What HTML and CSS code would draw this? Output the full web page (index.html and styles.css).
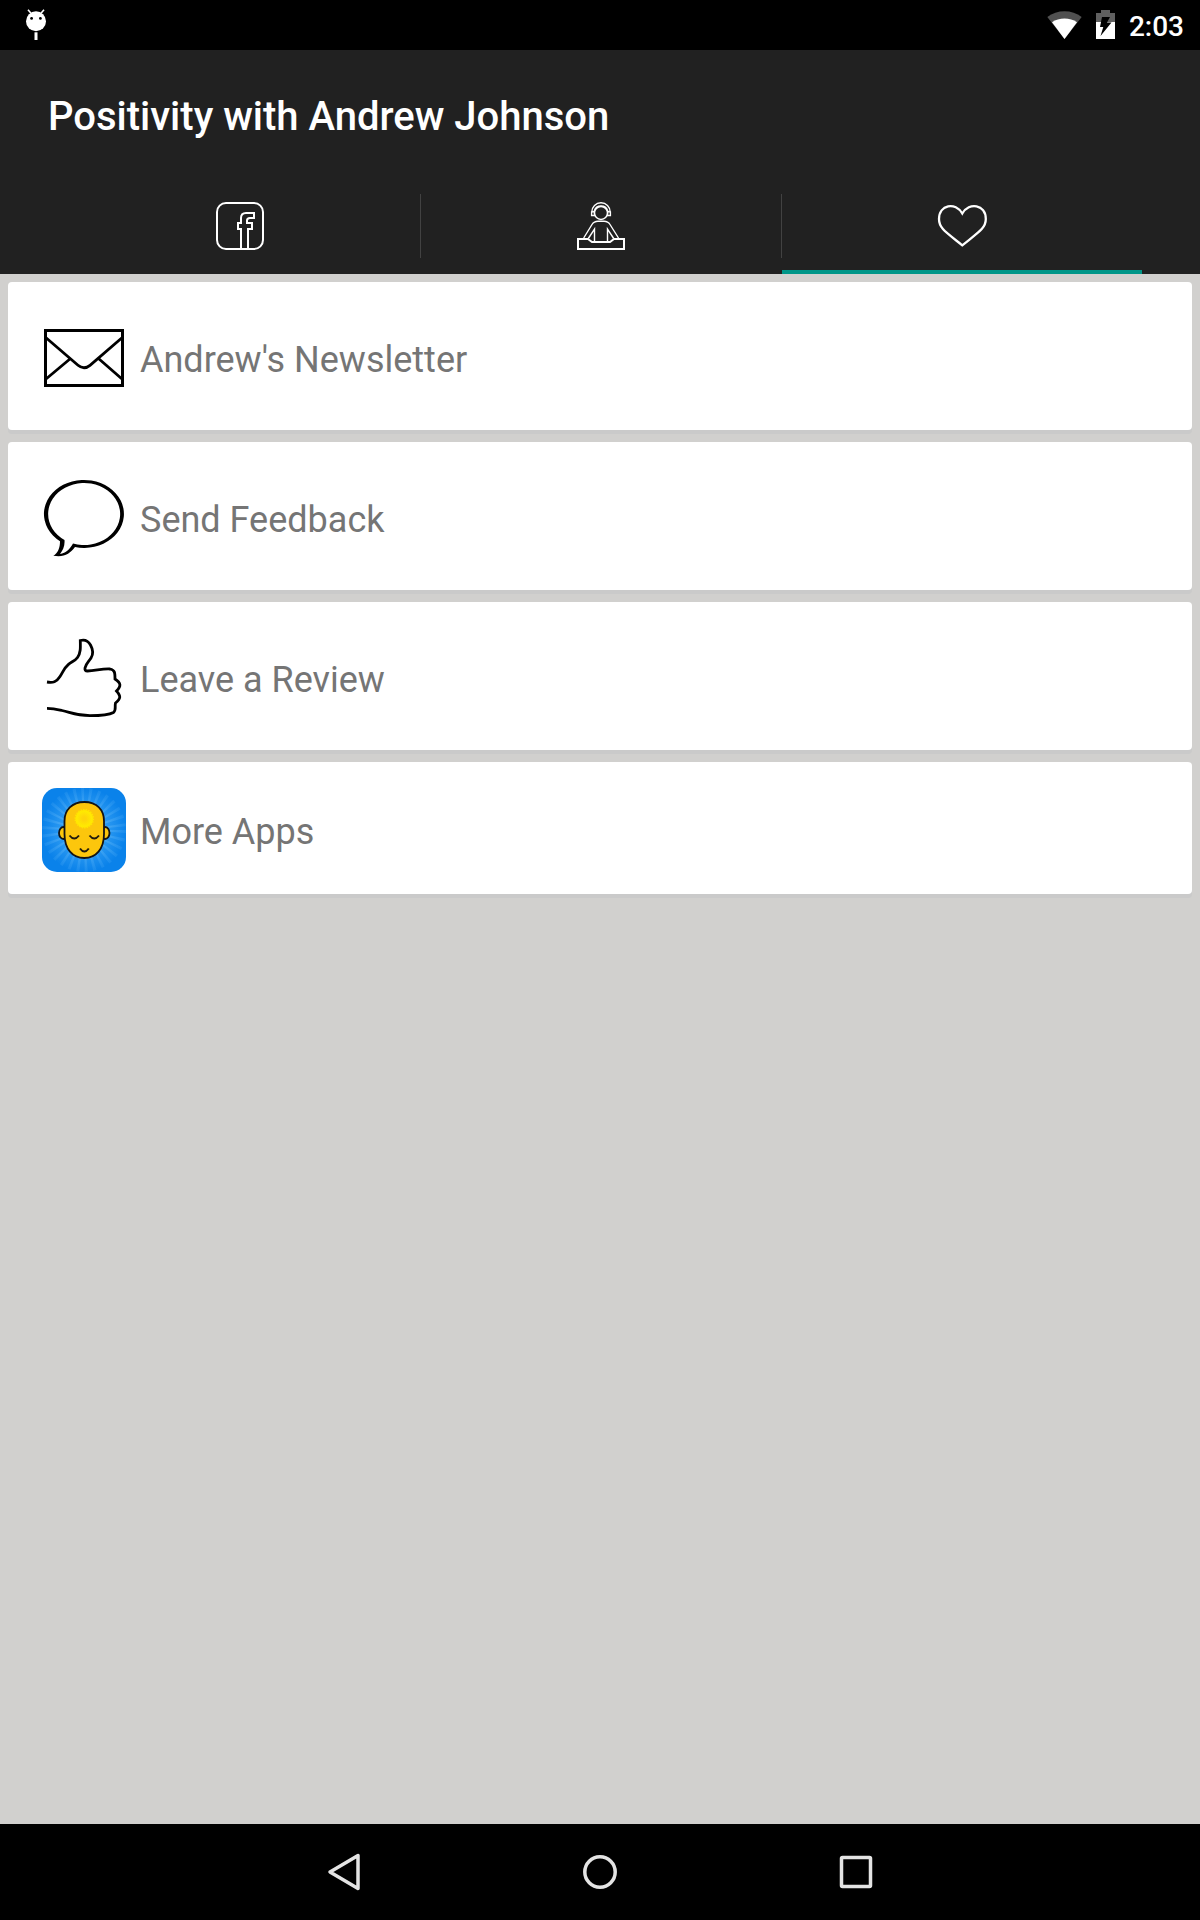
FILE: index.html
```html
<!DOCTYPE html>
<html lang="en">

<head>
    <meta charset="UTF-8">
    <meta name="viewport" content="width=device-width, initial-scale=1.0">
    <title>Positivity with Andrew Johnson</title>
    <link rel="stylesheet" href="styles.css">
</head>

<body>

    <div class="status-bar">
        <svg class="android" width="20" height="32" viewBox="0 0 20 32">
            <path d="M2 0.8L5 4.2M18 0.8L15 4.2" stroke="#fff" stroke-width="1.6" />
            <circle cx="10" cy="12.3" r="10" fill="#fff" />
            <circle cx="5.6" cy="9.4" r="1.4" />
            <circle cx="14.4" cy="9.4" r="1.4" />
            <path d="M8.5 23.3H11.5V31H8.5z" fill="#fff" />
        </svg>
        <div class="status-right">
            <svg width="35" height="30" viewBox="0 0 35 30">
                <path d="M17.5 29L0.3 7C10 -0.8 25 -0.8 34.7 7z" fill="#505050" />
                <path d="M17.5 29L5 12.2C12 7.2 23 7.2 30 12.2z" fill="#fff" />
            </svg>
            <svg width="19" height="30" viewBox="0 0 19 30">
                <path d="M5 0H14V3H19V12H0V3H5z" fill="#606060" />
                <path d="M0 12H19V29H0z" fill="#fff" />
                <path d="M6 7H14L11 12.5H15.5L4.5 26L7.3 17H4z" fill="#000" />
            </svg>
            <time>2:03</time>
        </div>
    </div>

    <header>
        <h1>Positivity with Andrew Johnson</h1>
        <nav class="tabs">
            <button class="tab" aria-label="Facebook">
                <svg width="48" height="48" viewBox="0 0 48 48">
                    <rect x="1" y="1" width="46" height="46" rx="9" />
                    <path d="M25 47V27H22V21H25V16Q25 11 30 11H38V16H34Q31 16 31 18.5V21H36V27H32V47" />
                </svg>
            </button>
            <button class="tab" aria-label="Sessions">
                <svg width="48" height="48" viewBox="0 0 48 48">
                    <g stroke-width="1.4">
                        <circle cx="24" cy="11" r="6.5" />
                        <path d="M14.8 10A9.2 9.2 0 0 1 33.2 10M17.3 9A7 7 0 0 1 30.7 9" />
                        <path d="M17.3 9.5L14.6 10V13.5H17.5zM30.7 9.5L33.4 10V13.5H30.5z" />
                        <path d="M6.7 36L15 22.5Q17 19.3 21 19.3H27Q31 19.3 33 22.5L41.5 36" />
                        <path d="M11.3 36.5L17.5 27V39.5M36.7 36.5L30.5 27V39.5" />
                    </g>
                    <path d="M1 37H11L15 40H33L37 37H47V47H1z" />
                </svg>
            </button>
            <button class="tab active" aria-label="Favourites">
                <svg width="50" height="48" viewBox="0 0 50 48">
                    <path stroke-width="2.3" d="M25.3 11.500C18.500 -0.500 2 2.500 2 17C2 26 8 29.500 25.300 43.300C42.500 29.500 48.800 26 48.800 17C48.800 2.500 32 -0.500 25.300 11.500z" />
                </svg>
            </button>
        </nav>
    </header>

    <main>
        <a class="card" href="#">
            <svg width="84" height="100" viewBox="0 0 84 100">
                <rect x="3.5" y="22.5" width="77" height="55" />
                <path d="M4 29.7L36 57.3Q42 62.3 48 57.3L80 29.7M4 71L28.5 50.5M80 71L56.5 50.5" stroke-width="2.8" />
            </svg>
            <span>Andrew's Newsletter</span>
        </a>
        <a class="card" href="#">
            <svg width="84" height="100" viewBox="0 0 84 100">
                <path d="M18 73.2A40 34 0 1 1 33 79.1C28 86 22 89.5 11.3 87.7C16 85 18 80 18 73.2zM22.5 72A36 31 0 1 1 31 75.5C28 81 24 85 18 86C21 82 23 78 22.5 72z" fill="#000" fill-rule="evenodd" stroke="none" />
            </svg>
            <span>Send Feedback</span>
        </a>
        <a class="card" href="#">
            <svg width="84" height="100" viewBox="0 0 84 100">
                <path stroke-width="2.8" d="M5 54C11 55 14.5 54 18 48.5C21 44 22 40 26.5 36.3C30 33.5 33 33 35.5 29.5C38.7 25 38.5 20 38.3 12.5C42 11.5 46 12.5 48.5 17C51 21.5 51.5 26 49 30C46.5 34 44 35.5 43 40Q42.5 43 45.5 43C53 43 60 40.5 68 41C73 42 73 45 73 51C79 55 79.5 58 74.5 63C79 68 79 70.5 73.5 75C72.5 79 74.5 82 71.5 84.5C66 87.5 56 87.7 48 87.7C34 87.7 29 84.5 20 82.5C15 81.3 11 80.3 5 80.3" />
            </svg>
            <span>Leave a Review</span>
        </a>
        <a class="card" href="#">
            <svg width="84" height="84" viewBox="0 0 84 84">
                <defs>
                    <radialGradient id="sky">
                        <stop offset="0.3" stop-color="#3ca5f5" />
                        <stop offset="1" stop-color="#0a82ea" />
                    </radialGradient>
                    <radialGradient id="ray" gradientUnits="userSpaceOnUse" cx="42" cy="42" r="46">
                        <stop offset="0.5" stop-color="#62b8f8" stop-opacity="0.5" />
                        <stop offset="1" stop-color="#3aa0f2" stop-opacity="0.2" />
                    </radialGradient>
                    <radialGradient id="sun">
                        <stop offset="0.2" stop-color="#fed50a" />
                        <stop offset="1" stop-color="#ffee00" />
                    </radialGradient>
                </defs>
                <rect width="84" height="84" rx="15" fill="url(#sky)" stroke="none" />
                <!-- sun rays behind the head -->
                <circle cx="42" cy="42" r="21" fill="none" stroke="url(#ray)" stroke-width="42" stroke-dasharray="1.6 2.8" />
                <g fill="#fcc60c" stroke="#141414" stroke-width="1.8">
                    <ellipse cx="21.5" cy="45" rx="4.5" ry="6" />
                    <ellipse cx="63" cy="45" rx="4.5" ry="6" />
                    <path d="M42.3 14C55 14 62 22 62 33V46C62 61 54 70 42.3 70C30.5 70 22.5 61 22.5 46V33C22.5 22 30 14 42.3 14z" />
                </g>
                <circle cx="42.3" cy="30.7" r="8.8" fill="url(#sun)" stroke="#ffe400" stroke-width="2" stroke-dasharray="1.4 1.1" />
                <path d="M27.5 47.5Q32.3 53.5 37 47.5M47.5 47.5Q52.3 53.5 57 47.5M38 60.5Q42.3 66.5 46.8 60.5" fill="none" stroke="#221c0c" stroke-width="2" />
            </svg>
            <span>More Apps</span>
        </a>
    </main>

    <footer class="nav-bar">
        <button aria-label="Back">
            <svg width="40" height="40" viewBox="0 0 40 40">
                <path d="M34 3.5V36.5L6 20z" />
            </svg>
        </button>
        <button aria-label="Home">
            <svg width="40" height="40" viewBox="0 0 40 40">
                <circle cx="20" cy="20" r="15.2" />
            </svg>
        </button>
        <button aria-label="Recent apps">
            <svg width="40" height="40" viewBox="0 0 40 40">
                <rect x="5.5" y="5.5" width="29" height="29" rx="1" />
            </svg>
        </button>
    </footer>

</body>

</html>
```
FILE: styles.css
```css
* {
    box-sizing: border-box;
    margin: 0;
}

body {
    display: flex;
    flex-direction: column;
    min-height: 100vh;
    background-color: #d1d0ce;
    font-family: Roboto, sans-serif;
}

button {
    display: flex;
    justify-content: center;
    align-items: center;
    padding: 0;
    border: none;
    background: none;
}

svg {
    display: block;
    flex-shrink: 0;
}

.status-bar {
    display: flex;
    justify-content: space-between;
    align-items: center;
    height: 50px;
    padding: 0 16px 0 26px;
    background-color: black;
    color: white;
    font-size: 28px;
    font-weight: 500;
}

.status-right {
    display: flex;
    align-items: center;
    gap: 14px;
}

time {
    padding-top: 2px;
}

header {
    background-color: #212121;
    color: white;
}

h1 {
    padding: 43px 48px 37px;
    font-size: 40px;
    line-height: 48px;
    font-weight: 500;
}

.tabs {
    display: grid;
    grid-template-columns: repeat(3, 1fr);
    gap: 1px;
    padding: 0 58px 0 60px;
}

.tab {
    position: relative;
    height: 96px;
}

.tab svg {
    fill: none;
    stroke: white;
    stroke-width: 2;
}

/* divider between two tabs */
.tab + .tab::before {
    content: "";
    position: absolute;
    left: -1px;
    top: 16px;
    bottom: 16px;
    width: 1px;
    background-color: #424242;
}

.active {
    box-shadow: inset 0 -4px #009688;
}

main {
    flex: 1;
    display: flex;
    flex-direction: column;
    gap: 12px;
    padding: 8px;
}

.card {
    display: flex;
    align-items: center;
    gap: 14px;
    padding: 26px 34px 22px;
    border-radius: 4px;
    background-color: white;
    box-shadow: 0 4px #cacaca;
    color: #757575;
    font-size: 36px;
    text-decoration: none;
}

.card span {
    padding-top: 4px;
}

.card svg {
    fill: none;
    stroke: black;
    stroke-width: 3;
}

.nav-bar {
    display: flex;
    justify-content: center;
    height: 96px;
    background-color: black;
}

.nav-bar button {
    width: 256px;
}

.nav-bar svg {
    fill: none;
    stroke: #e4e4e4;
    stroke-width: 3.5;
    stroke-linejoin: round;
}
```
